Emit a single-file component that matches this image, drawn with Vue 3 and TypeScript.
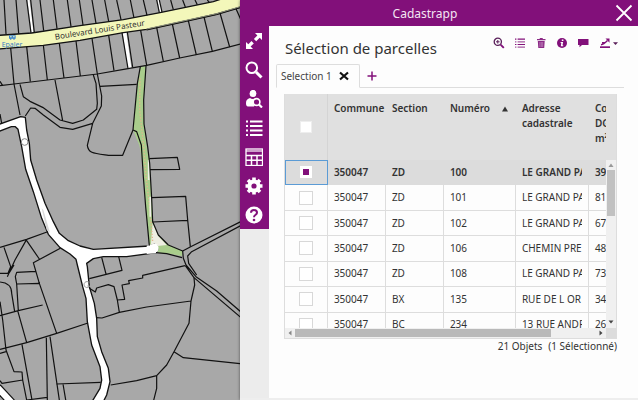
<script setup lang="ts">
import { computed, ref } from 'vue'

interface Parcel {
  commune: string
  section: string
  numero: string
  adresse: string
  contenance: string
  selected: boolean
}

const parcels = ref<Parcel[]>([
  { commune: '350047', section: 'ZD', numero: '100', adresse: 'LE GRAND PA', contenance: '39', selected: true },
  { commune: '350047', section: 'ZD', numero: '101', adresse: 'LE GRAND PA', contenance: '81', selected: false },
  { commune: '350047', section: 'ZD', numero: '102', adresse: 'LE GRAND PA', contenance: '67', selected: false },
  { commune: '350047', section: 'ZD', numero: '106', adresse: 'CHEMIN PRE', contenance: '48', selected: false },
  { commune: '350047', section: 'ZD', numero: '108', adresse: 'LE GRAND PA', contenance: '73', selected: false },
  { commune: '350047', section: 'BX', numero: '135', adresse: 'RUE DE L OR', contenance: '34', selected: false },
  { commune: '350047', section: 'BC', numero: '234', adresse: '13 RUE ANDR', contenance: '26', selected: false },
])

const total = 21
const selectedCount = computed(() => parcels.value.filter((p) => p.selected).length)

function toggleAll(event: Event) {
  const checked = (event.target as HTMLInputElement).checked
  parcels.value.forEach((p) => (p.selected = checked))
}
</script>

<template>
  <div class="app">
    <div class="map">
      <svg viewBox="0 0 720 1200" preserveAspectRatio="xMinYMin slice" role="img" aria-label="Plan cadastral">
        <rect width="2000" height="1200" fill="#a8a8a8" />

        <!-- green footpath -->
        <path d="M421 200L438 198L431 300L432 372L440 440L449 490L455 590L458 665L475 705L505 735L548 753L546 768L500 760L455 757L448 740L437 620L430 500L418 436L399 390L412 250Z" fill="#a9cd8c" />
        <path d="M458 668L475 708L500 735L452 740Z" fill="#eeeee2" />
        <path d="M420 235L419 330L432 450L438 530L449 620L458 725" fill="none" stroke="#e4b58c" stroke-width="4" stroke-dasharray="4 5" />
        <path d="M446 480L446 540M451 590L451 650" stroke="#f0f0e8" stroke-width="5" />

        <!-- white roads -->
        <path d="M-8 375L62 350L76 352L80 390L88 430L92 480L110 540L135 610L160 665L178 700L205 722L240 738L280 748L448 738L464 732C474 738 476 752 468 758L380 770L310 770L280 776L260 790L262 800L268 860L283 910L290 955L292 1010L305 1055L325 1105L330 1145L320 1185L305 1215L270 1215L300 1165L305 1140L300 1100L275 1035L262 965L258 895L248 860L232 795L228 778L210 762L180 743L145 703L125 655L100 575L77 508L65 440L54 388L46 380L34 380L-8 396Z" fill="#fff" stroke="#111" stroke-width="4" stroke-linejoin="round" />
        <path d="M466 730C480 738 478 754 466 760L440 762L440 737Z" fill="#fff" />
        <path d="M125 625L140 690L150 698L130 630Z" fill="#d9d9d9" />
        <path d="M-8 1162L35 1208" stroke="#111" stroke-width="26" />
        <path d="M-8 1162L35 1208" stroke="#fff" stroke-width="19" />
        <g fill="none" stroke="#fff">
          <path d="M373 94L389 206" stroke-width="11" />
          <path d="M85 -4L98 100M475 -4L482 36" stroke-width="6" />
        </g>

        <!-- boulevard -->
        <path d="M-5 106L95 99L240 77L370 59L480 38L640 5L670 -5L725 -5L725 20L650 42L560 62L440 88L370 98L240 121L130 136L-5 147Z" fill="#f3f7ba" stroke="#111" stroke-width="4" />
        <path d="M440 88L560 62L650 42L725 20" fill="none" stroke="#8f927f" stroke-width="5" />
        <path d="M440 90L560 64L650 44L725 22" fill="none" stroke="#111" stroke-width="3" />

        <g fill="none" stroke="#111" stroke-width="3.6" stroke-linejoin="round">
          <!-- plots north of the boulevard -->
          <path d="M12 0L18 102M48 0L56 100M80 0L93 99M92 0L103 98M120 0L131 92M160 0L171 86M202 0L213 80M238 0L249 75M276 0L288 70M314 0L326 64M350 0L363 59M391 0L402 54M430 0L441 46M470 0L478 38M478 0L486 36M512 0L520 29M548 0L556 21M585 0L592 14M622 0L628 7" />
          <!-- plots south of the boulevard -->
          <path d="M32 144L42 252M80 140L91 245M130 135L142 240M178 130L192 234M228 123L241 228M276 115L292 222M326 106L342 212M366 98L384 206M382 96L398 202M422 91L440 196M470 82L490 184M517 72L539 174M565 62L589 165M612 51L637 154M660 39L689 141M708 26L722 58" />
          <path d="M0 257L42 252L192 234L292 222L384 206L440 196L539 174L637 154L722 132" />
          <path d="M0 244L8 257M421 200L412 250L399 390L410 395L424 435L430 530L437 620L448 737M438 198L431 300L432 372L443 440L449 490L455 595L458 665L475 705L505 735L548 753L572 740L722 665M468 758L500 761L546 773" />
          <!-- lanes and gardens, north -->
          <path d="M42 252L60 345M60 253L70 290L90 304L128 322L180 360L218 370L250 360L290 328L292 310L288 250L280 225M165 240L188 362M292 222L305 288L304 318L278 370L218 388L180 382L130 345L105 325L92 324L76 348M0 342L5 370M300 259L410 253M278 370L262 436C265 460 280 460 325 466L368 466L399 390" />
          <!-- plots along the path -->
          <path d="M448 476L532 472L539 508L450 509M455 593L557 589L563 660L571 740M458 666L563 661" />
          <!-- lane going east and south-east -->
          <path d="M548 753L550 775L558 795L588 830L650 873L722 935M722 677L575 755L563 768L566 790L590 825M556 797L582 833L722 952" />
          <!-- west blocks -->
          <path d="M0 742L80 718L141 696M80 718L45 780L22 830M12 742L32 800L24 820L0 820M80 722L118 777M181 745L100 788L118 850L170 1000M128 915L55 932L0 947M305 772L318 822M356 770L366 811L268 836M108 814L50 817L46 830L50 852L120 850M50 852L55 932M0 846C25 848 35 860 35 880L44 935M0 905L8 960L18 1050L42 1115L66 1116L68 1140L6 1150L0 1142M42 795L28 818M53 932L80 1028M0 1048L80 1028L170 1000L264 969M0 1060L18 1055M66 1034L96 1200M139 1013L142 1200M150 1010L178 1200M68 1140L80 1200L142 1192" />
          <!-- south blocks -->
          <path d="M268 865L286 876L290 864L325 854L342 860L352 900L374 898L366 855L388 851L386 842L428 834L428 826L555 797M352 900L358 937M288 953L306 954L358 937L440 921L573 903M582 833L584 855L573 903L567 970L522 1055L500 1095L470 1127L410 1142L332 1155M522 1055L550 1073L722 1091M470 1127L470 1165L460 1205M170 1152L302 1147M189 1152L198 1205" />
        </g>

        <circle cx="74" cy="426" r="10" fill="none" stroke="#888" stroke-width="3" />
        <path d="M268 848A9 9 0 1 0 269 858H262" fill="none" stroke="#999" stroke-width="3" />

        <g class="stop">
          <path d="M27 106H47V116H44V119H40V116H34V119H30V116H27Z" fill="#4387cc" />
          <path d="M30 109H35V112H30ZM39 109H44V112H39Z" fill="#f3f7ba" />
          <text x="5" y="141">Epaler</text>
        </g>
        <text class="street" transform="translate(166 119) rotate(-9)">Boulevard Louis Pasteur</text>
      </svg>
    </div>

    <section class="panel">
      <header class="panel-head">
        <span class="panel-name">Cadastrapp</span>
        <button class="close" type="button" aria-label="Fermer">
          <svg viewBox="0 0 18 18"><path d="M1.5 1.500L16.500 16.500M16.500 1.500L1.500 16.500" fill="none" stroke="#fff" stroke-width="1.800" /></svg>
        </button>
      </header>

      <div class="panel-main">
        <div class="rail-column">
          <nav class="rail" aria-label="Outils">
            <button type="button" aria-label="Zoomer">
              <svg viewBox="0 0 18 18"><path d="M10 1H17V8L14.700 5.700L11.200 9.200L8.900 6.900L12.400 3.400ZM8 17H1V10L3.300 12.300L6.500 9.100L8.800 11.400L5.600 14.600Z" fill="#fff" /></svg>
            </button>
            <button type="button" aria-label="Rechercher une parcelle">
              <svg viewBox="0 0 18 18" fill="none" stroke="#fff"><circle cx="6.800" cy="6.800" r="5.300" stroke-width="2" /><path d="M11 11L16.500 16.500" stroke-width="3" /></svg>
            </button>
            <button type="button" aria-label="Rechercher un propriétaire">
              <svg viewBox="0 0 18 18"><ellipse cx="8" cy="3.500" rx="3.400" ry="3.600" fill="#fff" /><path d="M5 8C6.500 9.300 9 9.300 11 8L13 9.500L9 16.500H3C1.500 16.500 1 15 1 13C1 10 2.500 9 5 8Z" fill="#fff" /><circle cx="11.500" cy="12" r="3.400" fill="#82107a" stroke="#fff" stroke-width="1.600" /><path d="M14 14.500L17 17.500" stroke="#fff" stroke-width="2.200" /></svg>
            </button>
            <button type="button" aria-label="Sélection">
              <svg viewBox="0 0 18 18"><path d="M1 1.500H3V3.500H1ZM5 1.500H17.500V3.500H5ZM1 6H3V8H1ZM5 6H17.500V8H5ZM1 10.500H3V12.500H1ZM5 10.500H17.500V12.500H5ZM1 15H3V17H1ZM5 15H17.500V17H5Z" fill="#fff" /></svg>
            </button>
            <button type="button" aria-label="Tableau">
              <svg viewBox="0 0 18 18" fill="none" stroke="#fff"><rect x="1" y="1" width="16.500" height="16.500" stroke-width="1.300" /><path d="M1 3H17.500" stroke-width="1.200" /><path d="M1 7.500H17.500M1 12.300H17.500M6.500 7.500V17.500M12 7.500V17.500" stroke-width="1.500" /></svg>
            </button>
            <button type="button" aria-label="Préférences">
              <svg viewBox="0 0 18 18"><circle cx="9" cy="9" r="4.600" fill="none" stroke="#fff" stroke-width="4" /><path d="M9 .5V4M9 14V17.500M.5 9H4M14 9H17.500M3 3L5.500 5.500M12.500 12.500L15 15M15 3L12.500 5.500M5.500 12.500L3 15" stroke="#fff" stroke-width="3.600" /></svg>
            </button>
            <button type="button" aria-label="Aide">
              <svg viewBox="0 0 18 18"><circle cx="9" cy="9" r="8.500" fill="#fff" /><path d="M6 6.800C6 3.200 12 3.200 12 6.800C12 8.800 9 8.800 9 11.200" fill="none" stroke="#82107a" stroke-width="2" /><circle cx="9" cy="14" r="1.300" fill="#82107a" /></svg>
            </button>
          </nav>
        </div>

        <main class="content">
          <div class="title-row">
            <h1>Sélection de parcelles</h1>
            <div class="actions">
              <button type="button" aria-label="Zoomer sur la sélection">
                <svg viewBox="0 0 12 12" fill="none" stroke="#5a1f5a"><circle cx="4.800" cy="4.800" r="3.600" stroke-width="1.300" /><path d="M3 4.800H6.600M4.800 3V6.600" stroke-width="1" /><path d="M7.600 7.600L10.800 10.800" stroke="#82107a" stroke-width="1.900" /></svg>
              </button>
              <button type="button" aria-label="Liste">
                <svg viewBox="0 0 12 12" fill="none" stroke-width="1.200"><path d="M1 2.200H2.400M3.600 2.200H11M1 7.500H2.400M3.600 7.500H11" stroke="#82107a" /><path d="M1 4.900H2.400M3.600 4.900H11M1 10.100H2.400M3.600 10.100H11" stroke="#a65aa0" /></svg>
              </button>
              <button type="button" aria-label="Supprimer">
                <svg viewBox="0 0 12 12"><path d="M2 2H4.500L5 1H7.500L8 2H10.500V3.200H2ZM2.800 4H9.700L9.200 11H3.300Z" fill="#8c2a86" /><path d="M4.900 5V10M6.300 5V10M7.700 5V10" stroke="#ddb8da" stroke-width=".5" /></svg>
              </button>
              <button type="button" aria-label="Informations">
                <svg viewBox="0 0 12 12"><circle cx="6" cy="6" r="5" fill="#82107a" /><path d="M5.800 2.500H7.400V3.900H5.800ZM4.600 5H7.100L6.500 8.300H7.200V9.300H4.800L5.300 6H4.600Z" fill="#fff" /></svg>
              </button>
              <button type="button" aria-label="Annotations">
                <svg viewBox="0 0 12 12"><path d="M1 2H11.500V8H5L2.500 10.200V8H1Z" fill="#82107a" /></svg>
              </button>
              <button class="wide" type="button" aria-label="Exporter">
                <svg class="export" viewBox="0 0 20 12"><path d="M1 9.300H11V11H1Z" fill="#82107a" /><path d="M2 7.700C4 7.500 6 6 8.500 3.500M3 5.700H6" fill="none" stroke="#82107a" stroke-width="1.500" /><path d="M6.500 1.500H10.500V5.700Z" fill="#82107a" /><path d="M14 5.300H19L16.500 8Z" fill="#5a1f5a" /></svg>
              </button>
            </div>
          </div>

          <div class="tabs">
            <div class="tab">
              <a href="#selection-1">Selection 1</a>
              <button type="button" aria-label="Fermer Selection 1">
                <svg viewBox="0 0 10 10"><path d="M1 1.500L9 8.500M9 1.500L1 8.500" stroke="#111" stroke-width="2.200" /></svg>
              </button>
            </div>
            <button class="add" type="button" aria-label="Nouvelle sélection">
              <svg viewBox="0 0 10 10"><path d="M5 .5V9.500M.5 5H9.500" stroke="#82107a" stroke-width="1.500" /></svg>
            </button>
          </div>

          <div class="grid-area">
            <div class="data-grid">
              <div class="table-window">
                <table>
                  <colgroup>
                    <col class="c-check" /><col class="c-short" /><col class="c-short" /><col class="c-num" /><col class="c-long" /><col class="c-long" />
                  </colgroup>
                  <thead>
                    <tr>
                      <th class="check"><input type="checkbox" aria-label="Tout sélectionner" @change="toggleAll" /></th>
                      <th>Commune</th>
                      <th>Section</th>
                      <th><span class="sorted">Numéro<svg viewBox="0 0 6 6"><path d="M3 .5L6 5.500H0Z" fill="#333" /></svg></span></th>
                      <th>Adresse cadastrale</th>
                      <th>Co<br />DG<br />m²</th>
                    </tr>
                  </thead>
                  <tbody>
                    <tr v-for="p in parcels" :key="p.numero" :class="{ selected: p.selected }">
                      <td class="check"><input v-model="p.selected" type="checkbox" :aria-label="'Parcelle ' + p.numero" /></td>
                      <td>{{ p.commune }}</td>
                      <td>{{ p.section }}</td>
                      <td>{{ p.numero }}</td>
                      <td><div class="clip">{{ p.adresse }}</div></td>
                      <td>{{ p.contenance }}</td>
                    </tr>
                  </tbody>
                </table>
              </div>
              <div class="head-fill"></div>
              <div class="vbar">
                <svg viewBox="0 0 6 6"><path d="M3 1.500L5.500 5H.5Z" fill="#999" /></svg>
                <div class="thumb"></div>
                <svg viewBox="0 0 6 6"><path d="M.5 1.500H5.500L3 4.500Z" fill="#444" /></svg>
              </div>
              <div class="hbar">
                <svg viewBox="0 0 6 6"><path d="M4.500 .5V5.500L1.500 3Z" fill="#888" /></svg>
                <div class="track"><div class="thumb"></div></div>
                <svg viewBox="0 0 6 6"><path d="M1.500 .5V5.500L4.500 3Z" fill="#444" /></svg>
              </div>
              <div class="corner"></div>
            </div>
            <p class="summary"><span>{{ total }} Objets</span><span>({{ selectedCount }} Sélectionné)</span></p>
          </div>
        </main>
      </div>
    </section>
  </div>
</template>

<style>
body {
  background: #a8a8a8;
}
</style>

<style scoped>
.app {
  display: flex;
  height: 100vh;
  min-height: 360px;
  overflow: hidden;
  font-family: "Noto Sans", "Open Sans", sans-serif;
  font-size: 10px;
  color: #333;
}
.app * {
  box-sizing: border-box;
}
button {
  display: flex;
  align-items: center;
  justify-content: center;
  padding: 0;
  border: 0;
  background: none;
  font: inherit;
  cursor: pointer;
}
.map {
  flex: 1;
  min-width: 0;
  overflow: hidden;
}
.map svg {
  display: block;
  width: 100%;
  height: 100%;
}
.street {
  font-size: 24px;
  fill: #333;
}
.stop text {
  font-size: 21px;
  fill: #3b7fc4;
}
.panel {
  display: flex;
  flex-direction: column;
  flex: 0 0 62.4%;
  min-width: 0;
  background: #fdfdfd;
  border-bottom: 2px solid #eee;
  box-shadow: 0 0 3px rgba(0, 0, 0, 0.5);
}
.panel-head {
  display: grid;
  grid-template-columns: 28px 1fr 28px;
  align-items: center;
  height: 26px;
  background: #82107a;
  color: #f4e6f3;
}
.panel-name {
  grid-column: 2;
  padding-right: 28px;
  text-align: center;
  font-size: 12px;
}
.close svg {
  width: 18px;
  height: 18px;
}
.panel-main {
  display: flex;
  flex: 1;
  min-height: 0;
}
.rail-column {
  flex: 0 0 29px;
  background: #ececec;
}
.rail {
  background: #82107a;
}
.rail button {
  width: 29px;
  height: 29px;
  padding-top: 1px;
}
.rail svg {
  width: 18px;
  height: 18px;
}
.content {
  flex: 1;
  min-width: 0;
  padding: 0 14px 0 7px;
}
.title-row {
  display: flex;
  justify-content: space-between;
  padding: 7px 0 0 9px;
  height: 38px;
}
h1 {
  margin: 0;
  font-size: 15px;
  line-height: 30px;
  font-weight: 400;
  white-space: nowrap;
}
.actions {
  display: flex;
  height: 20px;
}
.actions button {
  width: 21px;
}
.actions button.wide {
  width: 31px;
}
.actions svg {
  width: 12px;
  height: 12px;
}
.actions svg.export {
  width: 20px;
}
.tabs {
  display: flex;
  height: 24px;
  border-bottom: 1px solid #ddd;
}
.tab {
  display: flex;
  align-items: center;
  gap: 7px;
  height: 24px;
  padding: 0 10px 0 4px;
  border: 1px solid #ddd;
  border-bottom-color: #fdfdfd;
  border-radius: 2px 2px 0 0;
}
.tab a {
  color: #444;
  text-decoration: none;
}
.tab svg,
.add svg {
  display: block;
  width: 10px;
  height: 10px;
}
.add {
  width: 24px;
}
.grid-area {
  padding: 6px 7px 0 8px;
}
.data-grid {
  display: grid;
  grid-template-columns: minmax(0, 1fr) 10px;
  grid-template-rows: 66px 168px 10px;
  border: 1px solid #ddd;
  border-top: 0;
}
.table-window {
  grid-row: 1 / 3;
  overflow: hidden;
}
table {
  width: 376px;
  height: 244px;
  table-layout: fixed;
  border-collapse: separate;
  border-spacing: 0;
}
.c-check {
  width: 43px;
}
.c-short {
  width: 58px;
}
.c-num {
  width: 72px;
}
.c-long {
  width: 73px;
}
th {
  height: 66px;
  padding: 7px 0 0 6px;
  background: #e0e0e0;
  text-align: left;
  vertical-align: top;
  font-weight: 600;
  line-height: 15px;
}
th.check {
  padding: 0;
  vertical-align: middle;
  border-right: 1px solid #d4d4d4;
}
td {
  padding: 0 6px 0 5px;
  border-right: 1px solid #ddd;
  border-bottom: 1px solid #ddd;
  line-height: 15px;
}
th.check,
td.check {
  padding: 0;
  text-align: center;
}
td:nth-child(n + 2) {
  padding-left: 6px;
}
.clip {
  overflow: hidden;
  white-space: nowrap;
}
.selected td {
  background: #dcdcdc;
  border-color: #dcdcdc;
  font-weight: 600;
}
.selected td.check {
  outline: 1px solid #5b9bd5;
  outline-offset: -1px;
}
.sorted {
  display: flex;
  align-items: center;
  justify-content: space-between;
  padding-right: 8px;
}
.sorted svg {
  width: 6px;
  height: 6px;
}
input[type="checkbox"] {
  display: block;
  width: 14px;
  height: 14px;
  margin: 0 auto;
  appearance: none;
  background: #fff;
  border: 1px solid #d8d8d8;
}
th input[type="checkbox"] {
  width: 12px;
  height: 12px;
  border-color: #eee;
}
input[type="checkbox"]:checked {
  width: 12px;
  height: 12px;
  border: 3px solid #fff;
  background: #82107a;
}
.head-fill {
  background: #e0e0e0;
}
.vbar {
  display: flex;
  flex-direction: column;
  align-items: center;
  padding: 2px 0 3px;
  background: #f0f0f0;
}
.vbar svg,
.hbar svg {
  display: block;
  flex: none;
  width: 6px;
  height: 6px;
}
.vbar .thumb {
  width: 8px;
  height: 46px;
  margin: 2px 0 auto;
  background: #c1c1c1;
}
.hbar {
  display: flex;
  align-items: center;
  gap: 2px;
  padding: 0 2px;
  background: #f0f0f0;
}
.track {
  flex: 1;
}
.hbar .thumb {
  width: 85%;
  height: 8px;
  background: #b9b9b9;
}
.corner {
  background: #dcdcdc;
}
.summary {
  display: flex;
  justify-content: flex-end;
  gap: 6px;
  margin: 0;
  font-size: 10px;
  line-height: 15px;
}
</style>
